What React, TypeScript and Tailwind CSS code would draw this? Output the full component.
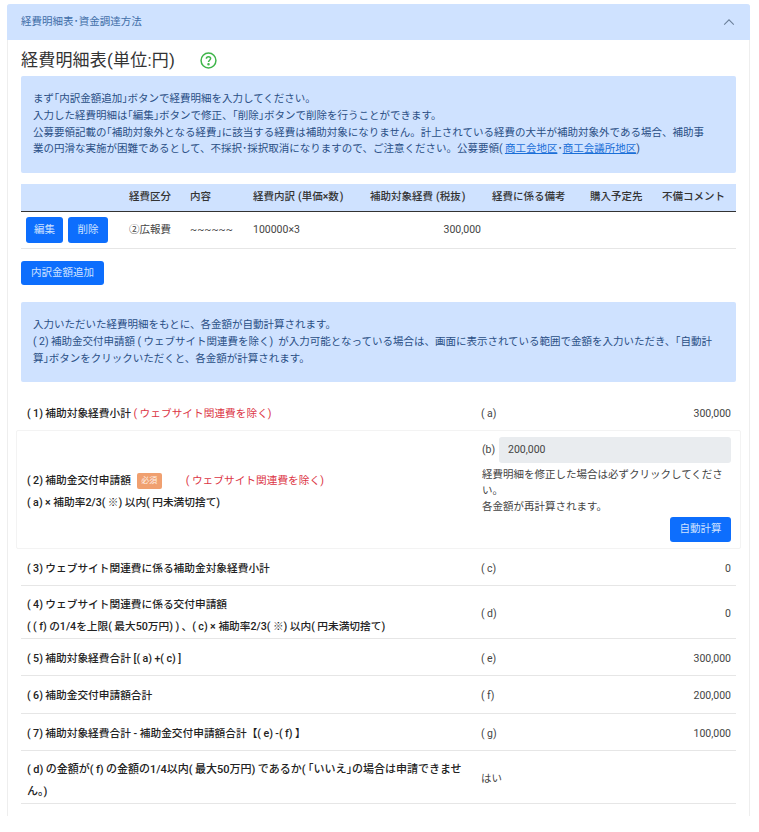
import React from "react";

function T({ s }: { s: string }) {
  return (
    <>
      {s.split(/([()])/).map((part, i) =>
        part === "(" || part === ")" ? (
          <span key={i} className="tracking-[2.4px]">{part}</span>
        ) : (
          <React.Fragment key={i}>{part}</React.Fragment>
        )
      )}
    </>
  );
}

function Row({ h, left, mid, right, border = true, leftClass = "" }: { h: string; left: React.ReactNode; mid: React.ReactNode; right?: string; border?: boolean; leftClass?: string }) {
  return (
    <div className={`flex items-center ${h} pt-[4px] pl-[6px] pr-[5px] ${border ? "border-b border-[#e6e6e6]" : ""}`}>
      <div className={`w-[454px] shrink-0 text-[10.7px] font-medium text-[#222] leading-[22px] ${leftClass}`}>{left}</div>
      <div className="w-[60px] shrink-0 text-[#444]">{mid}</div>
      <div className="flex-1 text-right text-[#444]">{right}</div>
    </div>
  );
}

export default function App() {
  return (
    <div className="w-[759px] h-[832px] bg-white overflow-hidden pt-[4px] pl-[7px] text-[10.5px] [font-family:'Roboto','Noto_Sans_CJK_JP',sans-serif]">
      <div className="w-[743px] h-[812px] border-x border-[#eeeeee] rounded-t-[3px]">
        <div className="-mx-px h-[36px] bg-[#cfe2ff] rounded-t-[3px] flex items-center justify-between pl-[14px] pr-[14px] text-[#3f6ea8]">
          <span>経費明細表･資金調達方法</span>
          <svg width="14" height="14" viewBox="0 0 16 16" fill="none" stroke="#6b7f99" strokeWidth="1.2"><path d="M2.5 11 8 5.5l5.5 5.5" /></svg>
        </div>
        <div className="pl-[13px] pr-[13px]">
          <div className="h-[36px] pt-[5px] flex items-center gap-[25px] text-[17px] tracking-[0.2px] text-[#333]">
            <span>経費明細表(単位:円)</span>
            <svg width="17" height="17" viewBox="0 0 16 16" fill="none" stroke="#3fb54a" strokeWidth="1.4">
              <circle cx="8" cy="8" r="7" />
              <path d="M6 6.3C6 5 7 4.4 8 4.4s2 .7 2 1.8c0 1.5-2 1.6-2 3.2" />
              <circle cx="8" cy="11.6" r=".5" fill="#3fb54a" />
            </svg>
          </div>
          <div className="h-[97px] bg-[#cfe2ff] rounded-[2px] pl-[12px] flex flex-col justify-center text-[#2a4f85] leading-[16.7px] whitespace-nowrap">
            <p>まず｢内訳金額追加｣ボタンで経費明細を入力してください。</p>
            <p>入力した経費明細は｢編集｣ボタンで修正、｢削除｣ボタンで削除を行うことができます。</p>
            <p>公募要領記載の｢補助対象外となる経費｣に該当する経費は補助対象になりません。計上されている経費の大半が補助対象外である場合、補助事</p>
            <p>業の円滑な実施が困難であるとして、不採択･採択取消になりますので、ご注意ください。公募要領<span className="tracking-[2.4px]">(</span><a className="text-[#1a6fd8] underline">商工会地区</a>･<a className="text-[#1a6fd8] underline">商工会議所地区</a>)</p>
          </div>

          <table className="mt-[11px] w-[715px] table-fixed border-collapse">
            <thead>
              <tr className="h-[27px] bg-[#cfe2ff] border-b border-[#333] text-left text-[#333]">
                <th className="w-[101px] font-medium" />
                <th className="w-[61px] pl-[7px] font-medium">経費区分</th>
                <th className="w-[63px] pl-[7px] font-medium">内容</th>
                <th className="w-[117px] pl-[7px] font-medium">経費内訳<span className="ml-[3px]">(</span>単価×数<span className="ml-[1px]">)</span></th>
                <th className="w-[122px] pl-[7px] font-medium">補助対象経費<span className="ml-[3px]">(</span>税抜<span className="ml-[1px]">)</span></th>
                <th className="w-[98px] pl-[7px] font-medium">経費に係る備考</th>
                <th className="w-[72px] pl-[7px] font-medium">購入予定先</th>
                <th className="w-[81px] pl-[7px] font-medium">不備コメント</th>
              </tr>
            </thead>
            <tbody>
              <tr className="h-[37px] border-b border-[#e6e6e6] text-[#444]">
                <td className="pl-[5px]">
                  <div className="flex gap-[5px]">
                    <button className="w-[37px] h-[26px] bg-[#0d6efd] rounded-[3px] text-[#cfe2ff]">編集</button>
                    <button className="w-[40px] h-[26px] bg-[#0d6efd] rounded-[3px] text-[#cfe2ff]">削除</button>
                  </div>
                </td>
                <td className="pl-[7px]">②広報費</td>
                <td className="pl-[7px]">~~~~~~</td>
                <td className="pl-[7px]">100000×3</td>
                <td className="pr-[4px] text-right">300,000</td>
                <td />
                <td />
                <td />
              </tr>
            </tbody>
          </table>

          <button className="mt-[12px] block w-[83px] h-[24px] bg-[#0d6efd] rounded-[3px] text-[#cfe2ff]">内訳金額追加</button>

          <div className="mt-[17px] h-[80px] bg-[#cfe2ff] rounded-[2px] pl-[12px] flex flex-col justify-center text-[#2a4f85] leading-[17px] whitespace-nowrap">
            <p>入力いただいた経費明細をもとに、各金額が自動計算されます。</p>
            <p><T s="(2)補助金交付申請額 (ウェブサイト関連費を除く) が入力可能となっている場合は、画面に表示されている範囲で金額を入力いただき、｢自動計" /></p>
            <p>算｣ボタンをクリックいただくと、各金額が計算されます。</p>
          </div>

          <div className="mt-[13px]">
            <Row h="h-[35px]" border={false} left={<><T s="(1)補助対象経費小計" /> <span className="text-[#dc3545] font-normal"><T s="(ウェブサイト関連費を除く)" /></span></>} mid={<T s="(a)" />} right="300,000" />
            <div className="-mx-[5px] h-[119px] border border-[#f3f3f3] rounded-[2px] flex pl-[10px] pr-[9px]">
              <div className="w-[455px] shrink-0 pt-[5px] flex flex-col justify-center text-[10.7px] font-medium text-[#222] leading-[22px]">
                <div className="flex items-center">
                  <span><T s="(2)補助金交付申請額" /></span>
                  <span className="ml-[6px] w-[25px] h-[16px] bg-[#f0a070] rounded-[2px] text-[8px] text-[#fff3ea] flex items-center justify-center font-normal">必須</span>
                  <span className="ml-[24px] text-[#dc3545] font-normal"><T s="(ウェブサイト関連費を除く)" /></span>
                </div>
                <div><T s="(a)× 補助率2/3(※)以内(円未満切捨て)" /></div>
              </div>
              <div className="flex-1 pt-[6px] text-[#444]">
                <div className="flex items-center h-[26px]">
                  <span className="w-[17px] shrink-0">(b)</span>
                  <div className="flex-1 h-[26px] bg-[#e9ecef] rounded-[3px] pl-[9px] flex items-center">200,000</div>
                </div>
                <div className="mt-[4px] leading-[16.4px]">
                  <p>経費明細を修正した場合は必ずクリックしてくださ</p>
                  <p>い。</p>
                  <p>各金額が再計算されます。</p>
                </div>
                <div className="mt-[1px] flex justify-end">
                  <button className="w-[61px] h-[25px] bg-[#0d6efd] rounded-[3px] text-[#cfe2ff]">自動計算</button>
                </div>
              </div>
            </div>
            <Row h="h-[37px]" left={<T s="(3)ウェブサイト関連費に係る補助金対象経費小計" />} mid={<T s="(c)" />} right="0" />
            <Row h="h-[53px]" leftClass="pt-[4px]" left={<><div><T s="(4)ウェブサイト関連費に係る交付申請額" /></div><div><T s="((f)の1/4を上限(最大50万円))、(c)× 補助率2/3(※)以内(円未満切捨て)" /></div></>} mid={<T s="(d)" />} right="0" />
            <Row h="h-[37px]" left={<T s="(5)補助対象経費合計 [(a)+(c)]" />} mid={<T s="(e)" />} right="300,000" />
            <Row h="h-[38px]" left={<T s="(6)補助金交付申請額合計" />} mid={<T s="(f)" />} right="200,000" />
            <Row h="h-[37px]" left={<T s="(7)補助対象経費合計 - 補助金交付申請額合計【(e)-(f)】" />} mid={<T s="(g)" />} right="100,000" />
            <Row h="h-[53px]" leftClass="pt-[4px] !text-[11px]" left={<><div><T s="(d)の金額が(f)の金額の1/4以内(最大50万円)であるか(｢いいえ｣の場合は申請できませ" /></div><div><T s="ん。)" /></div></>} mid="はい" />
          </div>
        </div>
      </div>
    </div>
  );
}
